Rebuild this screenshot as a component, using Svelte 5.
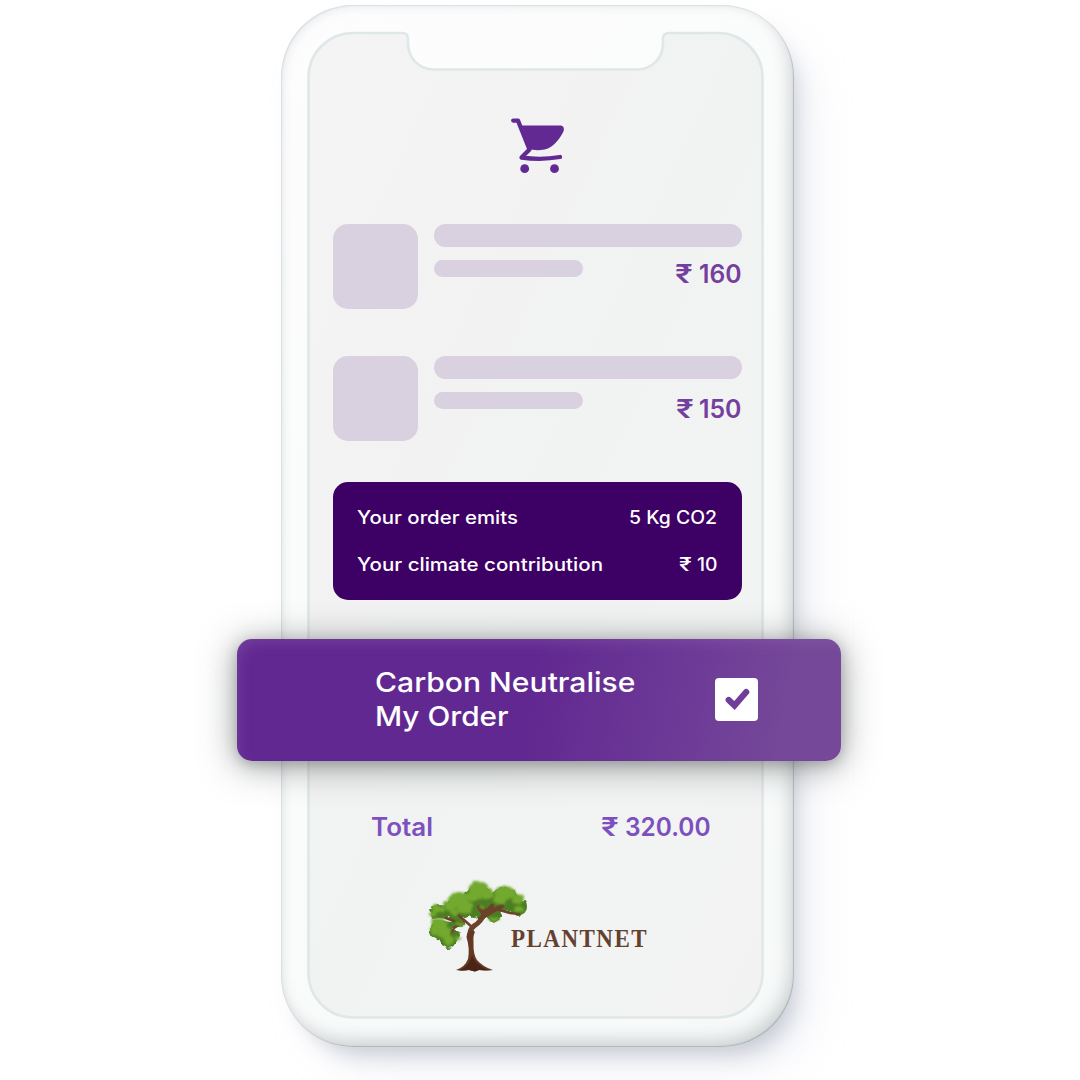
<script>
  const items = [
    { price: '160', width: 66.5 },
    { price: '150', width: 65.5 }
  ];
  // Leaf clusters of the tree logo: centre x, centre y, horizontal and vertical radius.
  const shade = [
    [56, 25, 14, 12], [37, 35, 15, 11], [82, 27, 15, 12], [97, 34, 8, 8], [18, 40, 10, 8],
    [19, 57, 11, 10], [26, 67, 8, 8], [34, 49, 9, 6], [71, 41, 9, 8], [60, 36, 9, 8], [33, 62, 5, 4], [52, 39, 7, 6]
  ];
  const leaves = [
    [56, 17, 10, 9], [50, 23, 7, 5], [65, 21, 7, 6], [36, 27, 10, 8], [28, 32, 6, 5], [43, 34, 8, 7],
    [83, 20, 10, 7], [78, 26, 7, 5], [96, 26, 6, 5], [97, 36, 5, 3], [16, 36, 7, 4], [11, 41, 3, 2],
    [17, 51, 8, 6], [22, 59, 7, 6], [12, 57, 4, 5], [27, 67, 5, 5], [36, 65, 3, 1.5], [60, 34, 2.5, 2],
    [38, 51, 3, 2], [72, 46, 5, 2], [32, 39, 5, 3]
  ];
</script>

{#snippet label(text, width, size, kind, adjust = 'spacingAndGlyphs')}
  <svg class="label {kind}" {width} height={size}>
    <text x="0" y={size * 0.86} font-size={size} textLength={width} lengthAdjust={adjust}>{text}</text>
  </svg>
{/snippet}

{#snippet amount(value, width, size, gap, kind)}
  <svg class="label {kind}" {width} height={size}>
    <text x="0" y={size * 0.86} font-size={size} textLength={size * 0.71} lengthAdjust="spacingAndGlyphs">₹</text>
    <text x={gap} y={size * 0.86} font-size={size} textLength={width - gap} lengthAdjust="spacingAndGlyphs">{value}</text>
  </svg>
{/snippet}

<main class="stage">
  <section class="phone">
    <svg class="screen" viewBox="0 0 513 1042" width="513" height="1042" aria-hidden="true">
      <defs>
        <linearGradient id="glass" x1="0" y1="0" x2="1" y2="1">
          <stop offset="0" stop-color="#f4f4f5" />
          <stop offset=".35" stop-color="#f2f2f2" />
          <stop offset=".5" stop-color="#f1f3f3" />
          <stop offset=".75" stop-color="#f2f3f3" />
          <stop offset="1" stop-color="#f2f2f2" />
        </linearGradient>
      </defs>
      <path
        d="M72 28H121Q127 28 127 34V38C127 53 138 64.500 153 64.500H356C371 64.500 382 53 382 38V34Q382 28 388 28H437A44.500 44.500 0 0 1 481.500 72.500V968A44.500 44.500 0 0 1 437 1012.500H72A44.500 44.500 0 0 1 27.500 968V72.500A44.500 44.500 0 0 1 72 28Z"
        fill="url(#glass)" stroke="#e0e7e9" stroke-width="2.600" />
    </svg>

    <div class="content">
      <svg class="cart" viewBox="0 0 56 58" width="56" height="58" aria-hidden="true">
        <path d="M3.200 2.600H8L19.500 31.500L11.500 39.500Q31 42.300 50 39" fill="none" stroke="#622993" stroke-width="4.300" stroke-linecap="round" stroke-linejoin="round" />
        <path d="M10 7.500H51Q55 8.500 53.500 13.500C48 24 41 31.500 31 32Q24 32.500 18.500 31Z" fill="#622993" />
        <circle cx="14.700" cy="50.700" r="4.400" fill="#622993" />
        <circle cx="44.500" cy="50.700" r="4.400" fill="#622993" />
      </svg>

      <div class="items">
        {#each items as item}
          <article class="item">
            <div class="thumb"></div>
            <div class="details">
              <div class="line"></div>
              <div class="meta">
                <div class="line short"></div>
                {@render amount(item.price, item.width, 25, item.width - 42.5, 'price')}
              </div>
            </div>
          </article>
        {/each}
      </div>

      <div class="impact">
        <div class="impact-row">
          {@render label('Your order emits', 161, 18, 'light')}
          {@render label('5 Kg CO2', 88, 18, 'light')}
        </div>
        <div class="impact-row">
          {@render label('Your climate contribution', 246, 18, 'light')}
          {@render amount('10', 38.5, 18, 18, 'light')}
        </div>
      </div>

      <div class="banner">
        <div class="banner-text">
          {@render label('Carbon Neutralise', 260.5, 27.5, 'light')}
          {@render label('My Order', 133.5, 27.5, 'light')}
        </div>
        <div class="checkbox">
          <svg viewBox="0 0 43 43" width="43" height="43" aria-hidden="true">
            <path d="M13.700 22L19.500 27.500L31.200 14" fill="none" stroke="#713d9a" stroke-width="6.200" stroke-linecap="round" stroke-linejoin="miter" />
          </svg>
        </div>
      </div>

      <div class="total">
        {@render label('Total', 62, 25, 'sum')}
        {@render amount('320.00', 109.5, 25, 24, 'sum')}
      </div>

      <div class="brand">
        <svg class="tree" viewBox="0 0 112 102" width="112" height="102" aria-hidden="true">
          <defs>
            <filter id="rough" x="-10%" y="-10%" width="120%" height="120%">
              <feTurbulence type="fractalNoise" baseFrequency=".16" numOctaves="2" seed="4" />
              <feDisplacementMap in="SourceGraphic" scale="6" xChannelSelector="R" yChannelSelector="G" />
              <feGaussianBlur stdDeviation=".5" />
            </filter>
            <filter id="soft" x="-10%" y="-10%" width="120%" height="120%">
              <feTurbulence type="fractalNoise" baseFrequency=".2" numOctaves="2" seed="9" />
              <feDisplacementMap in="SourceGraphic" scale="5" xChannelSelector="R" yChannelSelector="G" />
              <feGaussianBlur stdDeviation="1.1" />
            </filter>
          </defs>
          <g fill="#4e7d24" filter="url(#rough)">
            {#each shade as [cx, cy, rx, ry]}
              <ellipse {cx} {cy} {rx} {ry} />
            {/each}
          </g>
          <path d="M8 47Q18 43 31 48L28 49Q18 46 8 48Z" fill="#ece9e9" />
          <g fill="none" stroke="#6c422b" stroke-linecap="round" stroke-linejoin="round">
            <path d="M48 64Q47 57 52 53Q59 49 64 38" stroke-width="5" />
            <path d="M58 46Q66 40 80 33M61 43L70 33M62 41L57 34" stroke-width="4.500" />
            <path d="M50 54L34 40M43 48L32 55L28 62M24 45L32 48M74 36L88 40L97 41" stroke-width="2.500" />
          </g>
          <path d="M44.500 64Q45 57 51 57L53 59Q51 62 51.500 69Q51 81 55 87Q61 94 71 97Q64 98.500 57 97L53 98.500L47 97Q41 98.500 34 97Q43 94 46 86Q48 76 44.500 64Z" fill="#643923" />
          <path d="M50 82Q52 91 66 97L57 97L53 98.500L47 97L37 97.500Q48 93 50 82Z" fill="#4a2417" />
          <g fill="#72a92e" filter="url(#soft)">
            {#each leaves as [cx, cy, rx, ry]}
              <ellipse {cx} {cy} {rx} {ry} />
            {/each}
          </g>
        </svg>
        {@render label('PLANTNET', 137, 25, 'logotype', 'spacingAndGlyphs')}
      </div>
    </div>
  </section>
</main>

<style>
  :global(body) {
    background: #fff;
  }

  .stage {
    box-sizing: border-box;
    height: 1080px;
    padding-top: 5px;
    padding-left: 281px;
    overflow: hidden;
    font-family: Inter, 'Open Sans', sans-serif;
  }

  .phone {
    position: relative;
    width: 513px;
    height: 1042px;
    border-radius: 72px;
    background: linear-gradient(135deg, #fdfdfe, #fafbfb 50%, #f8fafa);
    box-shadow:
      inset -1px -1px 1px rgba(125, 130, 140, 0.4),
      inset 1px 1px 1px rgba(190, 198, 203, 0.4),
      inset -7px -10px 18px -4px rgba(160, 170, 172, 0.55),
      inset 5px 5px 10px -3px rgba(205, 212, 216, 0.35),
      10px 16px 22px -10px rgba(130, 135, 155, 0.42),
      24px 26px 36px -4px rgba(222, 224, 236, 0.38);
  }

  .screen {
    position: absolute;
    inset: 0;
  }

  .content {
    position: relative;
    display: flex;
    flex-direction: column;
    box-sizing: border-box;
    height: 100%;
    padding: 113px 52.400px 0 52.400px;
  }

  .label {
    display: block;
    flex: none;
    overflow: visible;
    font-weight: 500;
  }

  .price {
    margin-top: 1.400px;
    fill: #753f9e;
    font-weight: 600;
  }

  .item:nth-child(2) .price {
    margin-top: 3.400px;
  }

  .light {
    fill: #fff;
  }

  .sum {
    fill: #7d50c0;
    font-weight: 600;
  }

  .logotype {
    fill: #64402f;
    font-family: 'Liberation Serif', serif;
    font-weight: 700;
    letter-spacing: 1.600px;
  }

  .cart {
    margin-left: 176.600px;
  }

  .items {
    display: grid;
    gap: 47.400px;
    margin-top: 48px;
  }

  .item {
    display: flex;
    gap: 16px;
  }

  .thumb {
    width: 85px;
    height: 85px;
    border-radius: 15px;
    background: #d9d0e0;
  }

  .details {
    flex: 1;
  }

  .line {
    height: 23px;
    border-radius: 12px;
    background: #d9d0e0;
  }

  .short {
    width: 149px;
    height: 17px;
  }

  .meta {
    display: flex;
    justify-content: space-between;
    margin-top: 13px;
  }

  .impact {
    display: flex;
    flex-direction: column;
    gap: 28.500px;
    box-sizing: border-box;
    height: 118px;
    margin-top: 41px;
    padding: 27px 24.600px 0 24px;
    border-radius: 15px;
    background: #3d0064;
  }

  .impact-row {
    display: flex;
    justify-content: space-between;
  }

  .banner {
    display: flex;
    align-items: flex-start;
    justify-content: space-between;
    box-sizing: border-box;
    width: 604px;
    height: 122px;
    margin-top: 38.600px;
    margin-left: -96.400px;
    padding: 29px 82.600px 0 138px;
    border-radius: 15px;
    background: linear-gradient(100deg, #612891 0 48%, #6d3a97 73%, #754899 90%);
    box-shadow:
      inset 6px 8px 14px -5px rgba(150, 105, 180, 0.36),
      0 3px 12px rgba(75, 78, 78, 0.26),
      0 4px 34px 2px rgba(75, 78, 78, 0.52);
  }

  .banner-text {
    display: grid;
    gap: 6.500px;
  }

  .checkbox {
    width: 43px;
    height: 43px;
    margin-top: 10px;
    border-radius: 4px;
    background: #fff;
  }

  .total {
    display: flex;
    justify-content: space-between;
    margin-top: 53px;
    padding: 0 31px 0 37.600px;
  }

  .brand {
    display: flex;
    align-items: flex-start;
    margin-top: 34px;
    margin-left: 88.500px;
  }

  .logotype {
    margin-top: 52.500px;
    margin-left: -23px;
  }
</style>
